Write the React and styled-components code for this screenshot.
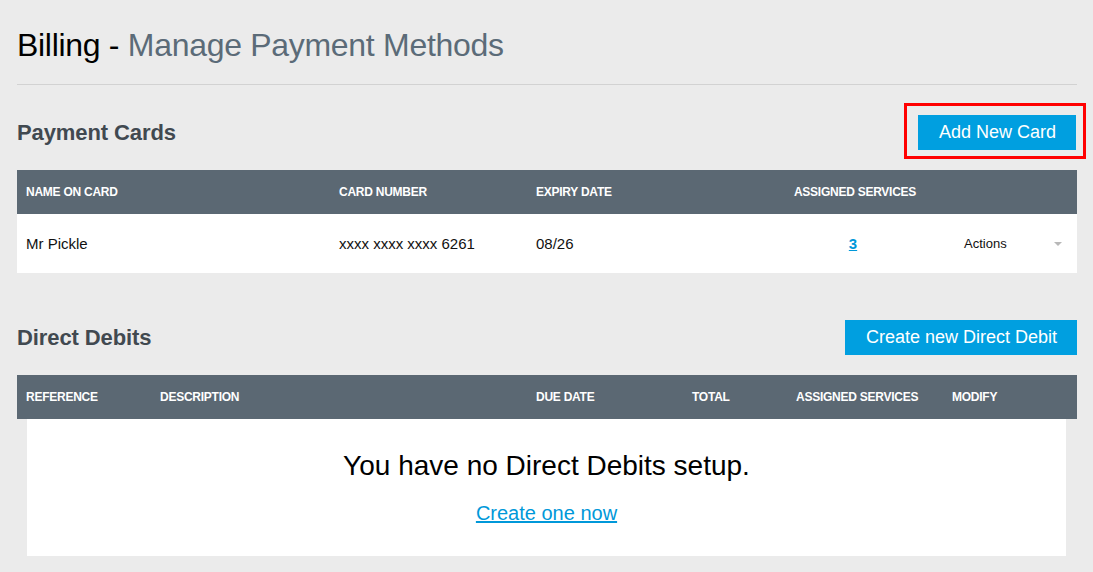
import React from "react"
import styled, {createGlobalStyle} from "styled-components"

const colors = {
	page: "#ebebeb",
	slate: "#5b6873",
	heading: "#414950",
	subtitle: "#5b6b78",
	blue: "#009fe0",
	link: "#0098d9",
}

const GlobalStyle = createGlobalStyle`
	body {
		margin: 0;
		background: ${colors.page};
		font-family: "Liberation Sans", Arial, sans-serif;
		color: #111;
	}
`

const cardCols = "313px 197px 228px 200px 1fr"
const debitCols = "134px 376px 156px 104px 156px 1fr"

const cards = [
	{name: "Mr Pickle", number: "xxxx xxxx xxxx 6261", expiry: "08/26", services: 3},
]

const App = () => {
	return (
		<>
			<GlobalStyle/>
			<Page>
				<Title>Billing - <span>Manage Payment Methods</span></Title>

				<SectionBar>
					<SectionTitle>Payment Cards</SectionTitle>
					<Highlight>
						<Button>Add New Card</Button>
					</Highlight>
				</SectionBar>
				<Table>
					<HeadRow cols={cardCols}>
						<HeadCell>Name on card</HeadCell>
						<HeadCell>Card number</HeadCell>
						<HeadCell>Expiry date</HeadCell>
						<HeadCell center>Assigned services</HeadCell>
						<HeadCell/>
					</HeadRow>
					{cards.map(card =>
						<Row cols={cardCols} key={card.number}>
							<Cell>{card.name}</Cell>
							<Cell>{card.number}</Cell>
							<Cell>{card.expiry}</Cell>
							<Cell center><CountLink href="#">{card.services}</CountLink></Cell>
							<Cell>
								<Actions>
									<span>Actions</span>
									<Caret/>
								</Actions>
							</Cell>
						</Row>
					)}
				</Table>

				<SectionBar second>
					<SectionTitle>Direct Debits</SectionTitle>
					<Button>Create new Direct Debit</Button>
				</SectionBar>
				<Table>
					<HeadRow cols={debitCols}>
						<HeadCell>Reference</HeadCell>
						<HeadCell>Description</HeadCell>
						<HeadCell>Due date</HeadCell>
						<HeadCell>Total</HeadCell>
						<HeadCell>Assigned services</HeadCell>
						<HeadCell>Modify</HeadCell>
					</HeadRow>
					<Empty>
						<EmptyText>You have no Direct Debits setup.</EmptyText>
						<EmptyLink href="#">Create one now</EmptyLink>
					</Empty>
				</Table>
			</Page>
		</>
	)
}
export default App

const Page = styled.div`
	padding: 0 16px 17px 17px;
`
const Title = styled.h1`
	margin: 0;
	padding: 26px 0 20px;
	font-size: 32px;
	line-height: 38px;
	font-weight: normal;
	letter-spacing: -0.3px;
	color: #000;
	border-bottom: 1px solid #d2d2d2;

	span {
		color: ${colors.subtitle};
	}
`
const SectionBar = styled.div`
	display: flex;
	align-items: center;
	justify-content: space-between;
	margin: ${props => props.second ? "47px 0 20px" : "30px 0 20px"};
`
const SectionTitle = styled.h2`
	margin: 0;
	font-size: 22px;
	font-weight: bold;
	letter-spacing: -0.1px;
	color: ${colors.heading};
`
const Highlight = styled.div`
	position: relative;
	margin-right: 1px;

	&:after {
		content: "";
		position: absolute;
		top: -12px;
		left: -14px;
		right: -10px;
		bottom: -9px;
		border: 3px solid #ff0000;
		pointer-events: none;
	}
`
const Button = styled.button`
	height: 35px;
	padding: 0 20px 0 21px;
	border: 0;
	border-radius: 0;
	background: ${colors.blue};
	color: #fff;
	font-family: inherit;
	font-size: 18px;
	cursor: pointer;
`
const Table = styled.div`
	display: flex;
	flex-direction: column;
`
const HeadRow = styled.div`
	display: grid;
	grid-template-columns: ${props => props.cols};
	height: 44px;
	align-items: center;
	background: ${colors.slate};
`
const HeadCell = styled.div`
	padding: 0 9px;
	color: #fff;
	font-size: 12px;
	font-weight: bold;
	text-transform: uppercase;
	letter-spacing: -0.25px;
	text-align: ${props => props.center ? "center" : "left"};
`
const Row = styled.div`
	display: grid;
	grid-template-columns: ${props => props.cols};
	height: 59px;
	align-items: center;
	background: #fff;
`
const Cell = styled.div`
	padding: 0 9px;
	font-size: 15px;
	color: #111;
	text-align: ${props => props.center ? "center" : "left"};
`
const CountLink = styled.a`
	color: ${colors.link};
	font-weight: bold;
	font-size: 15px;
	margin-right: 4px;
`
const Actions = styled.div`
	display: flex;
	align-items: center;
	justify-content: space-between;
	font-size: 13px;
	padding-right: 6px;
`
const Caret = styled.span`
	width: 0;
	height: 0;
	border-left: 4px solid transparent;
	border-right: 4px solid transparent;
	border-top: 4px solid #b8b8b8;
`
const Empty = styled.div`
	display: flex;
	flex-direction: column;
	align-items: center;
	margin: 0 11px 0 10px;
	padding: 29px 0 31px;
	background: #fff;
`
const EmptyText = styled.p`
	margin: 0 0 17px;
	font-size: 28px;
	line-height: 36px;
	color: #000;
`
const EmptyLink = styled.a`
	font-size: 20px;
	line-height: 24px;
	color: ${colors.link};
`
